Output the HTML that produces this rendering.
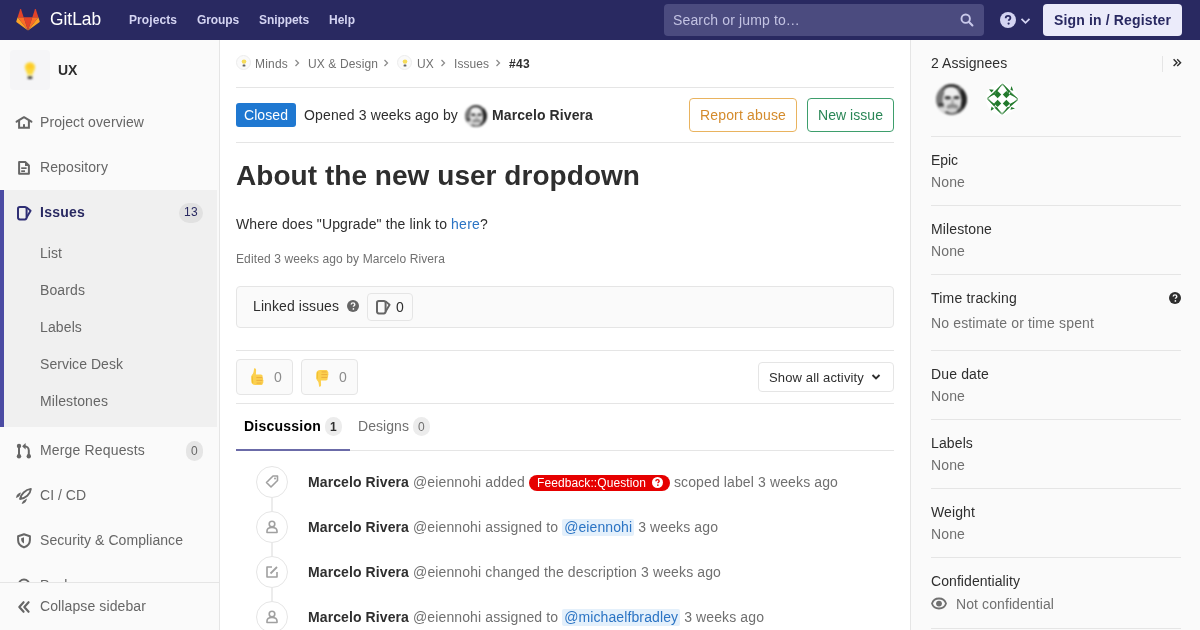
<!DOCTYPE html>
<html><head><meta charset="utf-8">
<style>
*{box-sizing:border-box;margin:0;padding:0}
html,body{width:1200px;height:630px;overflow:hidden;background:#fff;font-family:"Liberation Sans",sans-serif;color:#2e2e2e;font-size:14px}
.a{position:absolute}
.t{position:absolute;white-space:nowrap;line-height:1}
svg{position:absolute;display:block}
.nav{position:absolute;left:0;top:0;width:1200px;height:40px;background:#292961}
.lnk{position:absolute;top:14px;color:#d4d4f2;font-weight:bold;font-size:12px;line-height:1;white-space:nowrap}
.lsb{position:absolute;left:0;top:40px;width:220px;height:590px;background:#fafafa;box-shadow:inset -1px 0 0 #e5e5e5;overflow:hidden}
.si{color:#666;font-size:14px}
.rsb{position:absolute;left:910px;top:40px;width:290px;height:590px;background:#fafafa;box-shadow:inset 1px 0 0 #e5e5e5}
.hr{position:absolute;height:1px;background:#e5e5e5}
.rt{color:#2e2e2e;font-size:14px;left:21px}
.rv{color:#707070;font-size:14px;left:21px}
.tc{position:absolute;width:32px;height:32px;border-radius:50%;border:1px solid #e5e5e5;background:#fff;left:256px}
.tl{position:absolute;left:271px;width:2px;background:#ececec}
.tx{left:308px;font-size:14px;color:#707070}
.tx b{color:#2e2e2e}
.men{background:#e4f0fb;color:#2b74c4;border-radius:2px;padding:0 2px 1px 2px}
</style></head>
<body>
<div id="root" style="position:absolute;left:0;top:0;width:1200px;height:630px;will-change:transform">
<!-- NAVBAR -->
<div class="nav">
  <svg style="left:16px;top:8px" width="24" height="23" viewBox="0 0 36 35">
    <path fill="#E24329" d="M18 34.4l6.6-20.4H11.4z"></path>
    <path fill="#FC6D26" d="M18 34.4L11.4 14H2.2z"></path>
    <path fill="#FCA326" d="M2.2 14L.2 20.2c-.2.6 0 1.2.5 1.5L18 34.4z"></path>
    <path fill="#E24329" d="M2.2 14h9.2L7.4 1.8c-.2-.6-1.1-.6-1.3 0z"></path>
    <path fill="#FC6D26" d="M18 34.4L24.6 14h9.2z"></path>
    <path fill="#FCA326" d="M33.8 14l2 6.2c.2.6 0 1.2-.5 1.5L18 34.4z"></path>
    <path fill="#E24329" d="M33.8 14h-9.2l4-12.2c.2-.6 1.1-.6 1.3 0z"></path>
  </svg>
  <div class="t" style="left: 50px; top: 10px; color: rgb(255, 255, 255); font-size: 18px; transform: scaleX(0.965); transform-origin: 0px 0px; letter-spacing: -0.006px;">GitLab</div>
  <div class="lnk" style="left: 129px; letter-spacing: 0.081px;">Projects</div>
  <div class="lnk" style="left: 197px; letter-spacing: -0.111px;">Groups</div>
  <div class="lnk" style="left: 259px; letter-spacing: -0.084px;">Snippets</div>
  <div class="lnk" style="left: 329px; letter-spacing: -0.001px;">Help</div>
  <div class="a" style="left:664px;top:4px;width:320px;height:32px;border-radius:4px;background:#4b4b7f"></div>
  <div class="t" style="left: 673px; top: 13px; color: rgb(195, 195, 227); font-size: 14px; letter-spacing: 0.139px;">Search or jump to…</div>
  <svg style="left:960px;top:13px" width="14" height="14" viewBox="0 0 16 16"><circle cx="6.5" cy="6.5" r="4.8" fill="none" stroke="#c9c9ea" stroke-width="2.2"></circle><path d="M10 10l4.2 4.2" stroke="#c9c9ea" stroke-width="2.4" stroke-linecap="round"></path></svg>
  <svg style="left:1000px;top:12px" width="16" height="16" viewBox="0 0 16 16"><circle cx="8" cy="8" r="8" fill="#d4d4f2"></circle><path d="M5.7 6.2c0-1.4 1-2.3 2.4-2.3 1.4 0 2.3.9 2.3 2 0 1.5-1.7 1.6-1.7 2.9" fill="none" stroke="#292961" stroke-width="1.8"></path><circle cx="8.6" cy="11.6" r="1.1" fill="#292961"></circle></svg>
  <svg style="left:1020px;top:17px" width="11" height="8" viewBox="0 0 11 8"><path d="M1.5 1.8l4 4 4-4" fill="none" stroke="#d4d4f2" stroke-width="1.8"></path></svg>
  <div class="a" style="left:1043px;top:4px;width:139px;height:32px;border-radius:4px;background:#ebebfa"></div>
  <div class="t" style="left: 1054px; top: 13px; color: rgb(41, 41, 97); font-size: 14px; font-weight: bold; letter-spacing: 0.147px;">Sign in / Register</div>
</div>

<!-- LEFT SIDEBAR -->
<div class="lsb">
  <div class="a" style="left:10px;top:10px;width:40px;height:40px;border-radius:4px;background:#f5f5f7"></div>
  <svg style="left:22px;top:21px;filter:blur(0.8px)" width="16" height="19" viewBox="0 0 16 19"><path d="M8 1.2C4.8 1.2 2.8 3.5 2.8 6.3c0 2.5 2 4 2.5 6.9h5.4c.5-2.9 2.5-4.4 2.5-6.9C13.2 3.5 11.2 1.2 8 1.2z" fill="#fbd83c"></path><ellipse cx="8" cy="5.5" rx="3" ry="2.5" fill="#ffc928"></ellipse><rect x="5.3" y="13" width="5.4" height="2.6" fill="#f3e89a"></rect><rect x="5.6" y="15.4" width="4.8" height="2.6" rx="1" fill="#333"></rect></svg>
  <div class="t" style="left: 58px; top: 23px; font-size: 14px; font-weight: bold; color: rgb(46, 46, 46); letter-spacing: -0.224px;">UX</div>

  <svg style="left:12px;top:70px" width="24" height="24" viewBox="0 0 24 24"><path d="M4.6 11.6L12 7.2l7.4 4.4" fill="none" stroke="#666" stroke-width="2.1" stroke-linecap="round" stroke-linejoin="round"></path><path d="M7.1 10.2v7.5h9.8v-7.5" fill="none" stroke="#666" stroke-width="2"></path><rect x="11" y="14.2" width="2" height="3.8" fill="#666"></rect></svg>
  <div class="t si" style="left: 40px; top: 75px; letter-spacing: 0.081px;">Project overview</div>

  <svg style="left:12px;top:115px" width="24" height="24" viewBox="0 0 24 24"><path d="M7.1 7.1h6.4l3.4 3.4v8.3H7.1z" fill="none" stroke="#666" stroke-width="2" stroke-linejoin="round"></path><path d="M13 7.1l3.9 3.9H13z" fill="#666"></path><rect x="9.2" y="12.3" width="5.4" height="1.7" fill="#666"></rect><rect x="9.2" y="15.3" width="3.8" height="1.7" fill="#666"></rect></svg>
  <div class="t si" style="left: 40px; top: 120px; letter-spacing: 0.108px;">Repository</div>

  <div class="a" style="left:0;top:150px;width:217px;height:237px;background:#f0f0f0"></div>
  <div class="a" style="left:0;top:150px;width:4px;height:237px;background:#4b4ba3"></div>
  <svg style="left:16px;top:165px" width="16" height="16" viewBox="0 0 16 16"><rect x="2" y="2" width="8.6" height="12.4" rx="1.8" fill="none" stroke="#2f2f75" stroke-width="2"></rect><path d="M10.6 2.4L14.6 5.8L10.6 12.6" fill="none" stroke="#2f2f75" stroke-width="1.9" stroke-linejoin="round"></path></svg>
  <div class="t" style="left: 40px; top: 165px; font-size: 14px; font-weight: bold; color: rgb(41, 41, 97); letter-spacing: 0.236px;">Issues</div>
  <div class="a" style="left:179px;top:163px;width:24px;height:20px;border-radius:10px;background:#e1e1e1"></div>
  <div class="t" style="left: 184px; top: 166px; font-size: 12px; color: rgb(41, 41, 97); letter-spacing: 0.326px;">13</div>
  <div class="t si" style="left: 40px; top: 206px; letter-spacing: 0.053px;">List</div>
  <div class="t si" style="left: 40px; top: 243px; letter-spacing: 0.107px;">Boards</div>
  <div class="t si" style="left: 40px; top: 280px; letter-spacing: 0.124px;">Labels</div>
  <div class="t si" style="left: 40px; top: 317px; letter-spacing: 0.044px;">Service Desk</div>
  <div class="t si" style="left: 40px; top: 354px; letter-spacing: 0.108px;">Milestones</div>

  <svg style="left:12px;top:400px" width="24" height="24" viewBox="0 0 24 24"><circle cx="7" cy="5.9" r="2.2" fill="#666"></circle><circle cx="7" cy="16.2" r="2.2" fill="#666"></circle><path d="M7 6v10" stroke="#666" stroke-width="2"></path><circle cx="16.8" cy="16.2" r="2.2" fill="#666"></circle><path d="M16.8 16V10.6c0-2.4-1.8-4.3-4.3-4.3H11.8" fill="none" stroke="#666" stroke-width="2"></path><path d="M10.1 6.3l3.5-3.2v6.3z" fill="#666"></path></svg>
  <div class="t si" style="left: 40px; top: 403px; letter-spacing: 0.163px;">Merge Requests</div>
  <div class="a" style="left:186px;top:401px;width:17px;height:20px;border-radius:9px;background:#e5e5e5"></div>
  <div class="t" style="left: 191px; top: 405px; font-size: 12px; color: rgb(102, 102, 102); letter-spacing: 0.326px;">0</div>

  <svg style="left:12px;top:443px" width="24" height="24" viewBox="0 0 24 24"><path d="M8 16C8.8 11.4 13.3 6.6 18.9 5.9 18.3 11.4 13.5 15.4 8 16z" fill="none" stroke="#666" stroke-width="1.8" stroke-linejoin="round"></path><path d="M9 9.6C6.6 9.8 4.6 11.3 3.9 15 5.8 14.6 7.2 13.7 7.8 12.6z" fill="#666"></path><path d="M14.9 15.6C14.7 18.2 13.3 20.3 9.7 21 10.1 19.2 11 17.8 12.2 17.2z" fill="#666"></path></svg>
  <div class="t si" style="left: 40px; top: 448px; letter-spacing: 0.016px;">CI / CD</div>

  <svg style="left:12px;top:488px" width="24" height="24" viewBox="0 0 24 24"><path d="M12 6.3L6.1 8.2v4c0 3.4 2.6 5.9 5.9 7.2 3.3-1.3 5.9-3.8 5.9-7.2v-4z" fill="none" stroke="#666" stroke-width="2" stroke-linejoin="round"></path><path d="M12 9.2v6.2c-1.6-.8-2.8-2.2-2.8-4V10.2z" fill="#666"></path></svg>
  <div class="t si" style="left: 40px; top: 493px; letter-spacing: 0.066px;">Security &amp; Compliance</div>

  <svg style="left:17px;top:538px" width="14" height="14" viewBox="0 0 14 14"><circle cx="7" cy="7" r="5.5" fill="none" stroke="#666" stroke-width="1.9"></circle></svg>
  <div class="t si" style="left: 40px; top: 538px; letter-spacing: 0.065px;">Packages</div>

  <div class="a" style="left:0;top:542px;width:219px;height:48px;background:#fafafa;border-top:1px solid #e5e5e5"></div>
  <svg style="left:12px;top:554px" width="24" height="24" viewBox="0 0 24 24"><path d="M11.6 8.2L7.3 13l4.3 4.8M16.6 8.2L12.3 13l4.3 4.8" fill="none" stroke="#666" stroke-width="2.1" stroke-linecap="round" stroke-linejoin="round"></path></svg>
  <div class="t si" style="left: 40px; top: 559px; letter-spacing: 0.107px;">Collapse sidebar</div>
</div>

<!-- MAIN -->
<div id="main">
  <!-- breadcrumbs -->
  <div class="a" style="left:236px;top:55px;width:15px;height:15px;border-radius:50%;background:#fafafa;border:1px solid #ececec"></div>
  <svg style="left:241px;top:59px" width="6" height="8" viewBox="0 0 6 8"><ellipse cx="3" cy="2.6" rx="2.3" ry="2.2" fill="#f6dc5a"></ellipse><rect x="1.6" y="5.6" width="2.8" height="2" rx=".6" fill="#666"></rect></svg>
  <div class="t" style="left: 255px; top: 58px; font-size: 12px; color: rgb(112, 112, 112); letter-spacing: 0.198px;">Minds</div>
  <svg style="left:294px;top:59px" width="6" height="8" viewBox="0 0 6 8"><path d="M1.5 1l3 3-3 3" fill="none" stroke="#8c8c8c" stroke-width="1.3"></path></svg>
  <div class="t" style="left: 308px; top: 58px; font-size: 12px; color: rgb(112, 112, 112); letter-spacing: 0.119px;">UX &amp; Design</div>
  <svg style="left:383px;top:59px" width="6" height="8" viewBox="0 0 6 8"><path d="M1.5 1l3 3-3 3" fill="none" stroke="#8c8c8c" stroke-width="1.3"></path></svg>
  <div class="a" style="left:397px;top:55px;width:15px;height:15px;border-radius:50%;background:#fafafa;border:1px solid #ececec"></div>
  <svg style="left:402px;top:59px" width="6" height="8" viewBox="0 0 6 8"><ellipse cx="3" cy="2.6" rx="2.3" ry="2.2" fill="#f6dc5a"></ellipse><rect x="1.6" y="5.6" width="2.8" height="2" rx=".6" fill="#666"></rect></svg>
  <div class="t" style="left: 417px; top: 58px; font-size: 12px; color: rgb(112, 112, 112); letter-spacing: 0.165px;">UX</div>
  <svg style="left:440px;top:59px" width="6" height="8" viewBox="0 0 6 8"><path d="M1.5 1l3 3-3 3" fill="none" stroke="#8c8c8c" stroke-width="1.3"></path></svg>
  <div class="t" style="left: 454px; top: 58px; font-size: 12px; color: rgb(112, 112, 112); letter-spacing: 0.053px;">Issues</div>
  <svg style="left:495px;top:59px" width="6" height="8" viewBox="0 0 6 8"><path d="M1.5 1l3 3-3 3" fill="none" stroke="#8c8c8c" stroke-width="1.3"></path></svg>
  <div class="t" style="left: 509px; top: 58px; font-size: 12px; color: rgb(46, 46, 46); font-weight: bold; letter-spacing: 0.326px;">#43</div>
  <div class="hr" style="left:236px;top:87px;width:658px"></div>

  <!-- header -->
  <div class="a" style="left:236px;top:103px;width:60px;height:24px;border-radius:3px;background:#1f78d1"></div>
  <div class="t" style="left: 244px; top: 108px; font-size: 14px; color: rgb(255, 255, 255); letter-spacing: 0.07px;">Closed</div>
  <div class="t" style="left: 304px; top: 108px; font-size: 14px; color: rgb(46, 46, 46); letter-spacing: 0.143px;">Opened 3 weeks ago by</div>
  <svg style="left:465px;top:105px;filter:blur(0.8px)" width="22" height="22" viewBox="0 0 31 31"><defs><clipPath id="fc1"><circle cx="15.5" cy="15.5" r="15.3"></circle></clipPath></defs><g clip-path="url(#fc1)"><rect width="31" height="31" fill="#555"></rect><g><ellipse cx="5" cy="16" rx="5.5" ry="11" fill="#777"></ellipse><ellipse cx="29" cy="14" rx="4.5" ry="14" fill="#222"></ellipse><ellipse cx="17" cy="0" rx="12" ry="3.5" fill="#2a2a2a"></ellipse><ellipse cx="16" cy="16.5" rx="9.5" ry="12.5" fill="#dedede"></ellipse><ellipse cx="15" cy="8" rx="7" ry="5" fill="#efefef"></ellipse><ellipse cx="11.8" cy="13.8" rx="3.2" ry="1.7" fill="#3a3a3a"></ellipse><ellipse cx="20.5" cy="13.6" rx="3.2" ry="1.7" fill="#3a3a3a"></ellipse><ellipse cx="16.5" cy="18" rx="1.5" ry="3" fill="#b0b0b0"></ellipse><ellipse cx="16.5" cy="22.8" rx="6" ry="3" fill="#8e8e8e"></ellipse><ellipse cx="16.5" cy="26" rx="5" ry="2" fill="#d2d2d2"></ellipse><ellipse cx="5" cy="20.5" rx="3" ry="1.6" fill="#3c3c3c"></ellipse><ellipse cx="6" cy="26" rx="5" ry="3" fill="#d8d8d8"></ellipse><ellipse cx="25" cy="27" rx="4" ry="2.5" fill="#444"></ellipse></g></g></svg>
  <div class="t" style="left: 492px; top: 108px; font-size: 14px; font-weight: bold; color: rgb(46, 46, 46); letter-spacing: 0.1px;">Marcelo Rivera</div>
  <div class="a" style="left:689px;top:98px;width:108px;height:34px;border-radius:4px;border:1px solid #e9b35f;background:#fff"></div>
  <div class="t" style="left: 700px; top: 108px; font-size: 14px; color: rgb(212, 139, 44); letter-spacing: 0.162px;">Report abuse</div>
  <div class="a" style="left:807px;top:98px;width:87px;height:34px;border-radius:4px;border:1px solid #3e9e6c;background:#fff"></div>
  <div class="t" style="left: 818px; top: 108px; font-size: 14px; color: rgb(42, 134, 86); letter-spacing: 0.047px;">New issue</div>
  <div class="hr" style="left:236px;top:142px;width:658px"></div>

  <div class="t" style="left: 236px; top: 162px; font-size: 28px; font-weight: bold; color: rgb(46, 46, 46); letter-spacing: 0.042px;">About the new user dropdown</div>
  <div class="t" style="left: 236px; top: 217px; font-size: 14px; color: rgb(46, 46, 46); letter-spacing: 0.132px;">Where does "Upgrade" the link to <span style="color: rgb(43, 116, 196); letter-spacing: 0.245px;">here</span>?</div>
  <div class="t" style="left: 236px; top: 253px; font-size: 12px; color: rgb(112, 112, 112); letter-spacing: 0.118px;">Edited 3 weeks ago by Marcelo Rivera</div>

  <!-- linked issues -->
  <div class="a" style="left:236px;top:286px;width:658px;height:42px;border-radius:4px;border:1px solid #e5e5e5;background:#fafafa"></div>
  <div class="t" style="left: 253px; top: 299px; font-size: 14px; color: rgb(46, 46, 46); letter-spacing: 0.09px;">Linked issues</div>
  <svg style="left:347px;top:300px" width="12" height="12" viewBox="0 0 12 12"><circle cx="6" cy="6" r="6" fill="#666"></circle><path d="M4.2 4.6c0-1 .8-1.7 1.8-1.7s1.8.7 1.8 1.6c0 1.2-1.4 1.2-1.4 2.3" fill="none" stroke="#fafafa" stroke-width="1.4"></path><circle cx="6.4" cy="8.9" r=".85" fill="#fafafa"></circle></svg>
  <div class="a" style="left:367px;top:293px;width:46px;height:28px;border-radius:4px;border:1px solid #e5e5e5;background:#fafafa"></div>
  <svg style="left:375px;top:299px" width="16" height="16" viewBox="0 0 16 16"><rect x="2" y="2" width="8.6" height="12.4" rx="1.8" fill="none" stroke="#666" stroke-width="2"></rect><path d="M10.6 2.4L14.6 5.8L10.6 12.6" fill="none" stroke="#666" stroke-width="1.9" stroke-linejoin="round"></path></svg>
  <div class="t" style="left: 396px; top: 300px; font-size: 14px; color: rgb(46, 46, 46); letter-spacing: 0.214px;">0</div>

  <div class="hr" style="left:236px;top:350px;width:658px"></div>
  <!-- awards -->
  <div class="a" style="left:236px;top:359px;width:57px;height:36px;border-radius:4px;border:1px solid #e5e5e5;background:#fafafa"></div>
  <svg style="left:249px;top:367px" width="16" height="21" viewBox="0 0 16 21"><path d="M5.2 1.3c1.1-.4 1.9.4 1.9 1.6L6.9 7.6h5c1.1 0 1.9.9 1.7 2l-.1.9c.6.4.8 1.2.5 1.9.5.5.6 1.3.2 1.9.4.6.3 1.5-.3 1.9-.1 1.3-1 1.9-2.1 1.9H6.2c-2.2 0-3.9-1.4-3.9-3.6v-4.4c0-1.5.6-2.2 1.6-3.4C4.8 5.6 4.7 3.3 5.2 1.3z" fill="#fcd04f"></path><path d="M3.2 9.2c.2 2.3 0 5 .6 6.8" stroke="#f2c12e" stroke-width="1.2" fill="none"></path><path d="M7.4 10.6h6M7.4 13.4h6M7.6 16.1h5" stroke="#e9a93a" stroke-width=".9"></path></svg>
  <div class="t" style="left: 274px; top: 370px; font-size: 14px; color: rgb(140, 140, 140); letter-spacing: 0.214px;">0</div>
  <div class="a" style="left:301px;top:359px;width:57px;height:36px;border-radius:4px;border:1px solid #e5e5e5;background:#fafafa"></div>
  <svg style="left:314px;top:367px" width="16" height="21" viewBox="0 0 16 21"><g transform="translate(0 21) scale(1 -1)"><path d="M5.2 1.3c1.1-.4 1.9.4 1.9 1.6L6.9 7.6h5c1.1 0 1.9.9 1.7 2l-.1.9c.6.4.8 1.2.5 1.9.5.5.6 1.3.2 1.9.4.6.3 1.5-.3 1.9-.1 1.3-1 1.9-2.1 1.9H6.2c-2.2 0-3.9-1.4-3.9-3.6v-4.4c0-1.5.6-2.2 1.6-3.4C4.8 5.6 4.7 3.3 5.2 1.3z" fill="#fcd04f"></path><path d="M3.2 9.2c.2 2.3 0 5 .6 6.8" stroke="#f2c12e" stroke-width="1.2" fill="none"></path><path d="M7.4 10.6h6M7.4 13.4h6M7.6 16.1h5" stroke="#e9a93a" stroke-width=".9"></path></g></svg>
  <div class="t" style="left: 339px; top: 370px; font-size: 14px; color: rgb(140, 140, 140); letter-spacing: 0.214px;">0</div>

  <div class="a" style="left:758px;top:362px;width:136px;height:30px;border-radius:4px;border:1px solid #e5e5e5;background:#fff"></div>
  <div class="t" style="left: 769px; top: 371px; font-size: 13px; color: rgb(46, 46, 46); letter-spacing: 0.148px;">Show all activity</div>
  <svg style="left:871px;top:373px" width="10" height="8" viewBox="0 0 10 8"><path d="M1.5 2l3.5 3.5L8.5 2" fill="none" stroke="#2e2e2e" stroke-width="1.9"></path></svg>
  <div class="hr" style="left:236px;top:403px;width:658px"></div>

  <!-- tabs -->
  <div class="t" style="left: 244px; top: 419px; font-size: 14px; font-weight: bold; color: rgb(0, 0, 0); letter-spacing: 0.231px;">Discussion</div>
  <div class="a" style="left:325px;top:417px;width:17px;height:19px;border-radius:9px;background:#ececec"></div>
  <div class="t" style="left: 330px; top: 421px; font-size: 12px; font-weight: bold; color: rgb(46, 46, 46); letter-spacing: 0.326px;">1</div>
  <div class="t" style="left: 358px; top: 419px; font-size: 14px; color: rgb(112, 112, 112); letter-spacing: 0.06px;">Designs</div>
  <div class="a" style="left:413px;top:417px;width:17px;height:19px;border-radius:9px;background:#ececec"></div>
  <div class="t" style="left: 418px; top: 421px; font-size: 12px; color: rgb(112, 112, 112); letter-spacing: 0.326px;">0</div>
  <div class="hr" style="left:236px;top:450px;width:658px"></div>
  <div class="a" style="left:236px;top:449px;width:114px;height:2px;background:#6b6ba8"></div>

  <!-- timeline -->
  <div class="tl" style="top:498px;height:14px"></div>
  <div class="tl" style="top:543px;height:14px"></div>
  <div class="tl" style="top:588px;height:14px"></div>
  <div class="tc" style="top:466px"></div>
  <svg style="left:264px;top:474px" width="16" height="16" viewBox="0 0 16 16"><path d="M9 2h4.5v4.5L7 13 2.5 8.5z" fill="none" stroke="#a0a0a0" stroke-width="1.6" stroke-linejoin="round"></path><circle cx="11" cy="4.6" r="1" fill="#a0a0a0"></circle></svg>
  <div class="tc" style="top:511px"></div>
  <svg style="left:264px;top:519px" width="16" height="16" viewBox="0 0 16 16"><circle cx="8" cy="5" r="2.8" fill="none" stroke="#a0a0a0" stroke-width="1.6"></circle><path d="M3 13.5v-1.5c0-2 1.7-3.5 5-3.5s5 1.5 5 3.5v1.5z" fill="none" stroke="#a0a0a0" stroke-width="1.6" stroke-linejoin="round"></path></svg>
  <div class="tc" style="top:556px"></div>
  <svg style="left:264px;top:564px" width="16" height="16" viewBox="0 0 16 16"><path d="M8 3H3v10h10V8" fill="none" stroke="#a0a0a0" stroke-width="1.6" stroke-linejoin="round"></path><path d="M6.5 9.5l6.5-6.5" stroke="#a0a0a0" stroke-width="1.8"></path></svg>
  <div class="tc" style="top:601px"></div>
  <svg style="left:264px;top:609px" width="16" height="16" viewBox="0 0 16 16"><circle cx="8" cy="5" r="2.8" fill="none" stroke="#a0a0a0" stroke-width="1.6"></circle><path d="M3 13.5v-1.5c0-2 1.7-3.5 5-3.5s5 1.5 5 3.5v1.5z" fill="none" stroke="#a0a0a0" stroke-width="1.6" stroke-linejoin="round"></path></svg>

  <div class="t tx" style="top: 475px; letter-spacing: 0.125px;"><b style="letter-spacing: 0.1px;">Marcelo Rivera</b> @eiennohi added <span style="display:inline-block;width:141px;height:1px"></span> scoped label 3 weeks ago</div>
  <div class="a" style="left:529px;top:475px;width:141px;height:16px;border-radius:8px;background:#e60000"></div>
  <div class="t" style="left: 537px; top: 477px; font-size: 12px; color: rgb(255, 255, 255); letter-spacing: 0.089px;">Feedback::Question</div>
  <svg style="left:652px;top:477px" width="11" height="11" viewBox="0 0 12 12"><circle cx="6" cy="6" r="6" fill="#fff"></circle><path d="M4.2 4.6c0-1 .8-1.7 1.8-1.7s1.8.7 1.8 1.6c0 1.2-1.4 1.2-1.4 2.3" fill="none" stroke="#e60000" stroke-width="1.5"></path><circle cx="6.4" cy="8.9" r=".9" fill="#e60000"></circle></svg>
  <div class="t tx" style="top: 520px; letter-spacing: 0.117px;"><b style="letter-spacing: 0.1px;">Marcelo Rivera</b> @eiennohi assigned to <span class="men" style="letter-spacing: 0.095px;">@eiennohi</span> 3 weeks ago</div>
  <div class="t tx" style="top: 565px; letter-spacing: 0.129px;"><b style="letter-spacing: 0.1px;">Marcelo Rivera</b> @eiennohi changed the description 3 weeks ago</div>
  <div class="t tx" style="top: 610px; letter-spacing: 0.117px;"><b style="letter-spacing: 0.1px;">Marcelo Rivera</b> @eiennohi assigned to <span class="men" style="letter-spacing: 0.109px;">@michaelfbradley</span> 3 weeks ago</div>
</div>

<!-- RIGHT SIDEBAR -->
<div class="rsb">
  <div class="t rt" style="top: 16px; letter-spacing: 0.066px;">2 Assignees</div>
  <div class="a" style="left:252px;top:16px;width:1px;height:16px;background:#e5e5e5"></div>
  <svg style="left:262px;top:18px" width="10" height="10" viewBox="0 0 10 10"><path d="M1.6 1.3l3.4 3.4-3.4 3.4M5.2 1.3l3.4 3.4-3.4 3.4" fill="none" stroke="#2e2e2e" stroke-width="1.4"></path></svg>
  <svg style="left:26px;top:44px;filter:blur(0.8px)" width="31" height="31" viewBox="0 0 31 31"><defs><clipPath id="fc2"><circle cx="15.5" cy="15.5" r="15.3"></circle></clipPath></defs><g clip-path="url(#fc2)"><rect width="31" height="31" fill="#555"></rect><g><ellipse cx="5" cy="16" rx="5.5" ry="11" fill="#777"></ellipse><ellipse cx="29" cy="14" rx="4.5" ry="14" fill="#222"></ellipse><ellipse cx="17" cy="0" rx="12" ry="3.5" fill="#2a2a2a"></ellipse><ellipse cx="16" cy="16.5" rx="9.5" ry="12.5" fill="#dedede"></ellipse><ellipse cx="15" cy="8" rx="7" ry="5" fill="#efefef"></ellipse><ellipse cx="11.8" cy="13.8" rx="3.2" ry="1.7" fill="#3a3a3a"></ellipse><ellipse cx="20.5" cy="13.6" rx="3.2" ry="1.7" fill="#3a3a3a"></ellipse><ellipse cx="16.5" cy="18" rx="1.5" ry="3" fill="#b0b0b0"></ellipse><ellipse cx="16.5" cy="22.8" rx="6" ry="3" fill="#8e8e8e"></ellipse><ellipse cx="16.5" cy="26" rx="5" ry="2" fill="#d2d2d2"></ellipse><ellipse cx="5" cy="20.5" rx="3" ry="1.6" fill="#3c3c3c"></ellipse><ellipse cx="6" cy="26" rx="5" ry="3" fill="#d8d8d8"></ellipse><ellipse cx="25" cy="27" rx="4" ry="2.5" fill="#444"></ellipse></g></g></svg>
  <div class="a" style="left:76px;top:43px;width:32px;height:32px;border-radius:50%;background:#fff;overflow:hidden"><svg style="left:0;top:0" width="32" height="32" viewBox="0 0 31 31"><g transform="translate(15.5 15.5) scale(1.06) translate(-15.5 -15.5)"><g fill="#237a2d"><path d="M11.5 8.2l3.3 3.3-3.3 3.3-3.3-3.3z"></path><path d="M19.5 8.2l3.3 3.3-3.3 3.3-3.3-3.3z"></path><path d="M11.5 16.2l3.3 3.3-3.3 3.3-3.3-3.3z"></path><path d="M19.5 16.2l3.3 3.3-3.3 3.3-3.3-3.3z"></path><path d="M15.9 1.2L8.2 9.5l2.2.6z"></path><path d="M15.9 1.2L23.3 8.7l-1.9 1.5z"></path><path d="M1.4 15L9.2 8.6l-.2 2.6z"></path><path d="M1.4 15L8.6 22.6l.6-2.4z"></path><path d="M30.9 15.7L22.6 9.2l.3 2.5z"></path><path d="M30.9 15.7L23 22.4l-.5-2.3z"></path><path d="M15.6 30.1L8.4 23.2l2.4-.4z"></path><path d="M15.6 30.1L22.8 22.9l-2.5.2z"></path><path d="M3.5 6.5l4.5.5-2 2.5z"></path><path d="M24.2 3.5l1.6 4.5-2.6-.8z"></path><path d="M5 26.5l1-4.2 2.2 2z"></path><path d="M27.5 24.2l-4.3 1.2.8-2.5z"></path></g><path d="M15.9 2.2L29.8 15.7 15.6 29 2.5 15z" fill="none" stroke="#237a2d" stroke-width="1" opacity=".6"></path></g></svg></div>
  <div class="hr" style="left:21px;top:96px;width:250px"></div>

  <div class="t rt" style="top: 113px; letter-spacing: -0.059px;">Epic</div>
  <div class="t rv" style="top: 135px; letter-spacing: 0.133px;">None</div>
  <div class="hr" style="left:21px;top:165px;width:250px"></div>
  <div class="t rt" style="top: 182px; letter-spacing: 0.12px;">Milestone</div>
  <div class="t rv" style="top: 204px; letter-spacing: 0.133px;">None</div>
  <div class="hr" style="left:21px;top:234px;width:250px"></div>
  <div class="t rt" style="top: 251px; letter-spacing: 0.192px;">Time tracking</div>
  <svg style="left:259px;top:252px" width="12" height="12" viewBox="0 0 12 12"><circle cx="6" cy="6" r="6" fill="#2e2e2e"></circle><path d="M4.2 4.6c0-1 .8-1.7 1.8-1.7s1.8.7 1.8 1.6c0 1.2-1.4 1.2-1.4 2.3" fill="none" stroke="#fafafa" stroke-width="1.4"></path><circle cx="6.4" cy="8.9" r=".85" fill="#fafafa"></circle></svg>
  <div class="t rv" style="top: 276px; letter-spacing: 0.14px;">No estimate or time spent</div>
  <div class="hr" style="left:21px;top:310px;width:250px"></div>
  <div class="t rt" style="top: 327px; letter-spacing: 0.147px;">Due date</div>
  <div class="t rv" style="top: 349px; letter-spacing: 0.133px;">None</div>
  <div class="hr" style="left:21px;top:379px;width:250px"></div>
  <div class="t rt" style="top: 396px; letter-spacing: 0.124px;">Labels</div>
  <div class="t rv" style="top: 418px; letter-spacing: 0.133px;">None</div>
  <div class="hr" style="left:21px;top:448px;width:250px"></div>
  <div class="t rt" style="top: 465px; letter-spacing: 0.113px;">Weight</div>
  <div class="t rv" style="top: 487px; letter-spacing: 0.133px;">None</div>
  <div class="hr" style="left:21px;top:517px;width:250px"></div>
  <div class="t rt" style="top: 534px; letter-spacing: 0.071px;">Confidentiality</div>
  <svg style="left:21px;top:557px" width="16" height="13" viewBox="0 0 16 13"><path d="M8 1.5C4.5 1.5 1.8 3.8 1 6.5c.8 2.7 3.5 5 7 5s6.2-2.3 7-5c-.8-2.7-3.5-5-7-5z" fill="none" stroke="#707070" stroke-width="1.8"></path><circle cx="8" cy="6.6" r="2.9" fill="#707070"></circle></svg>
  <div class="t rv" style="left: 46px; top: 557px; letter-spacing: 0.094px;">Not confidential</div>
  <div class="hr" style="left:21px;top:588px;width:250px"></div>
</div>
</div>

</body></html>
